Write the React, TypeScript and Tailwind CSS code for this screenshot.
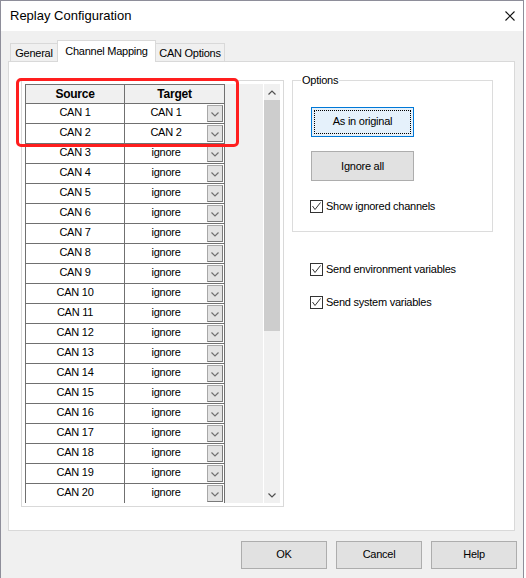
import React from "react";

const rows = Array.from({ length: 20 }, (_, i) => ({
  source: `CAN ${i + 1}`,
  target: i < 2 ? `CAN ${i + 1}` : "ignore",
}));

function Chevron({ up = false, color = "#606060" }: { up?: boolean; color?: string }) {
  return (
    <svg width="8" height="5" viewBox="0 0 8 5">
      <polyline
        points={up ? "0.5,4.5 4,1 7.5,4.5" : "0.5,0.5 4,4 7.5,0.5"}
        fill="none"
        stroke={color}
        strokeWidth="1.2"
      />
    </svg>
  );
}

function CheckBox({ label, className = "" }: { label: string; className?: string }) {
  return (
    <div className={`flex items-center h-[13px] ${className}`}>
      <span className="w-[13px] h-[13px] border border-[#333333] bg-white flex items-center justify-center shrink-0">
        <svg width="11" height="11" viewBox="0 0 11 11">
          <polyline points="1.5,5 4,8.5 9.5,1.5" fill="none" stroke="#333333" strokeWidth="1" />
        </svg>
      </span>
      <span className="ml-[3px] whitespace-nowrap">{label}</span>
    </div>
  );
}

function MappingGrid() {
  return (
    <div className="w-[263px] h-[427px] border border-[#d9d9d9] bg-white p-[3px] shrink-0">
      <div className="flex h-[419px] overflow-hidden bg-[#f0f0f0]">
        {/* table */}
        <div className="w-[200px] shrink-0 border-l border-t border-[#707070] bg-white self-start">
          <div className="flex h-[19px] bg-[#f0f0f0] font-bold text-[12px]">
            <div className="w-[99px] border-r border-b border-[#707070] flex items-center justify-center">Source</div>
            <div className="w-[100px] border-r border-b border-[#707070] flex items-center justify-center">Target</div>
          </div>
          {rows.map((r) => (
            <div key={r.source} className="flex h-[20px]">
              <div className="w-[99px] border-r border-b border-[#707070] flex items-center justify-center pb-[3px]">
                {r.source}
              </div>
              <div className="relative w-[100px] border-r border-b border-[#707070] flex items-center justify-center pr-[17px] pb-[3px]">
                {r.target}
                <span className="absolute right-[1px] top-[1px] w-[16px] h-[17px] bg-[#e3e3e3] border border-[#a8a8a8] border-r-[#7a7a7a] border-b-[#7a7a7a] flex items-center justify-center pt-[1px]">
                  <Chevron color="#707070" />
                </span>
              </div>
            </div>
          ))}
        </div>
        <div className="flex-1" />
        {/* scrollbar */}
        <div className="w-[17px] h-full border-l border-white flex flex-col">
          <div className="h-[16px] flex items-center justify-center pt-[1px]">
            <Chevron up color="#505050" />
          </div>
          <div className="h-[231px] bg-[#cdcdcd]" />
          <div className="flex-1" />
          <div className="h-[16px] flex items-center justify-center">
            <Chevron color="#505050" />
          </div>
        </div>
      </div>
    </div>
  );
}

function OptionsPanel() {
  return (
    <div className="w-[201px]">
      <div className="relative h-[152px] border border-[#dcdcdc] pt-[26px] pl-[18px]">
        <span className="absolute left-[8px] top-[-8px] leading-[14px] bg-white px-px">Options</span>
        <button className="relative w-[103px] h-[30px] border border-[#0078d7] bg-[#e5f1fb] flex items-center justify-center pb-px">
          <span className="absolute inset-[2px] border border-dotted border-black" />
          As in original
        </button>
        <button className="mt-[14px] w-[103px] h-[30px] border border-[#adadad] bg-[#e1e1e1] flex items-center justify-center">
          Ignore all
        </button>
        <CheckBox label="Show ignored channels" className="mt-[19px] -ml-px" />
      </div>
      <div className="pl-[18px]">
        <CheckBox label="Send environment variables" className="mt-[31px]" />
        <CheckBox label="Send system variables" className="mt-[20px]" />
      </div>
    </div>
  );
}

export default function App() {
  return (
    <div className="relative w-[526px] h-[578px] bg-white overflow-hidden font-['Liberation_Sans',Arial,sans-serif] text-[11px] tracking-[-0.25px] text-black">
      <div className="w-[524px] h-[578px] border-l border-r border-t border-[#8e8e9a] flex flex-col">
        {/* title bar */}
        <div className="h-[30px] bg-white flex items-center justify-between pl-[9px] pr-[8px] shrink-0">
          <span className="text-[13px] tracking-normal pb-px">Replay Configuration</span>
          <svg width="10" height="10" viewBox="0 0 10 10">
            <path d="M0.5 0.5 L9.5 9.5 M9.5 0.5 L0.5 9.5" stroke="#111" strokeWidth="1.1" />
          </svg>
        </div>

        <div className="flex-1 bg-[#f0f0f0] pl-[7px] pr-[8px] pt-[9px]">
          {/* tabs */}
          <div className="relative z-10 flex items-end h-[21px] pl-[2px]">
            <div className="w-[47px] h-[18px] border border-r-0 border-b-0 border-[#d9d9d9] bg-[#f0f0f0] flex items-center justify-center pt-px">
              General
            </div>
            <div className="w-[99px] h-[22px] -mb-px border border-b-0 border-[#d9d9d9] bg-white flex items-center justify-center pb-px">
              Channel Mapping
            </div>
            <div className="w-[69px] h-[18px] border border-l-0 border-b-0 border-[#d9d9d9] bg-[#f0f0f0] flex items-center justify-center pt-px">
              CAN Options
            </div>
          </div>

          {/* tab page */}
          <div className="h-[470px] border border-[#d9d9d9] bg-white pt-[18px] pl-[12px] flex items-start gap-[8px]">
            <MappingGrid />
            <OptionsPanel />
          </div>

          {/* dialog buttons */}
          <div className="mt-[10px] -mr-[2px] flex justify-end gap-[9px]">
            {["OK", "Cancel", "Help"].map((b) => (
              <button
                key={b}
                className="w-[86px] h-[28px] border border-[#adadad] bg-[#e1e1e1] flex items-center justify-center pb-px"
              >
                {b}
              </button>
            ))}
          </div>
        </div>
      </div>

      {/* highlight annotation */}
      <div className="absolute left-[16px] top-[78px] w-[223px] h-[69px] border-[3px] border-[#ff1e1e] rounded-[5px] pointer-events-none" />
    </div>
  );
}
